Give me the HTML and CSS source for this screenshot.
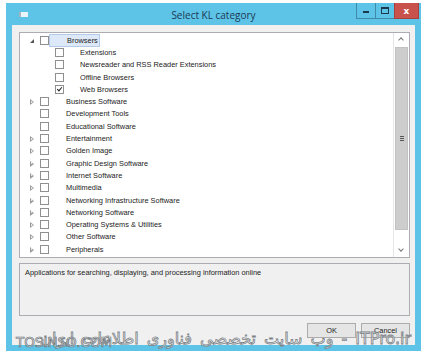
FILE: index.html
```html
<!DOCTYPE html>
<html lang="en">
<head>
    <meta charset="UTF-8">
    <title>Select KL category</title>
    <link rel="stylesheet" href="styles.css">
</head>
<body>
    <div class="window">
        <div class="titlebar">
            <span class="app-icon"></span>
            <span class="title">Select KL category</span>
            <div class="caption-buttons">
                <span class="cap-btn min"><i></i></span>
                <span class="cap-btn max"><i></i></span>
                <span class="cap-btn close">x</span>
            </div>
        </div>
        <div class="client">
            <div class="tree">
                <ul class="rows">
                    <li class="row"><span class="exp open"></span><span class="box"></span><span class="label selected">Browsers</span></li>
                    <li class="row child"><span class="box"></span><span class="label">Extensions</span></li>
                    <li class="row child"><span class="box"></span><span class="label">Newsreader and RSS Reader Extensions</span></li>
                    <li class="row child"><span class="box"></span><span class="label">Offline Browsers</span></li>
                    <li class="row child"><span class="box checked"></span><span class="label">Web Browsers</span></li>
                    <li class="row"><span class="exp"></span><span class="box"></span><span class="label">Business Software</span></li>
                    <li class="row"><span class="exp none"></span><span class="box"></span><span class="label">Development Tools</span></li>
                    <li class="row"><span class="exp none"></span><span class="box"></span><span class="label">Educational Software</span></li>
                    <li class="row"><span class="exp"></span><span class="box"></span><span class="label">Entertainment</span></li>
                    <li class="row"><span class="exp"></span><span class="box"></span><span class="label">Golden Image</span></li>
                    <li class="row"><span class="exp"></span><span class="box"></span><span class="label">Graphic Design Software</span></li>
                    <li class="row"><span class="exp"></span><span class="box"></span><span class="label">Internet Software</span></li>
                    <li class="row"><span class="exp"></span><span class="box"></span><span class="label">Multimedia</span></li>
                    <li class="row"><span class="exp"></span><span class="box"></span><span class="label">Networking Infrastructure Software</span></li>
                    <li class="row"><span class="exp"></span><span class="box"></span><span class="label">Networking Software</span></li>
                    <li class="row"><span class="exp"></span><span class="box"></span><span class="label">Operating Systems &amp; Utilities</span></li>
                    <li class="row"><span class="exp"></span><span class="box"></span><span class="label">Other Software</span></li>
                    <li class="row"><span class="exp"></span><span class="box"></span><span class="label">Peripherals</span></li>
                    <li class="row"><span class="exp none"></span><span class="box"></span><span class="label"></span></li>
                </ul>
                <div class="scrollbar">
                    <span class="arrow up"></span>
                    <div class="track">
                        <div class="thumb"><span class="grip"></span></div>
                    </div>
                    <span class="arrow down"></span>
                </div>
            </div>
            <div class="description">Applications for searching, displaying, and processing information online</div>
            <div class="buttons">
                <button class="btn">OK</button>
                <button class="btn">Cancel</button>
            </div>
        </div>
        <div class="watermark">
            <span class="wm-fa" dir="rtl">ITPro.ir - وب سایت تخصصی فناوری اطلاعات ایران</span>
            <span class="wm-en">TOSINSO.COM</span>
        </div>
    </div>
</body>
</html>
```
FILE: styles.css
```css
body {
    margin: 0;
    background: #fff;
    font-family: "Liberation Sans", Arial, sans-serif;
}

.window {
    position: relative;
    width: 415px;
    height: 348px;
    margin: 3px 0 0 6px;
    background: #5dc3e7;
    padding: 0 6px 6px;
    box-sizing: border-box;
}

.titlebar {
    height: 22px;
    display: flex;
    align-items: center;
    justify-content: center;
    position: relative;
}

.app-icon {
    position: absolute;
    left: 7px;
    top: 9px;
    width: 7px;
    height: 5px;
    background: #e9f5fa;
    border-left: 2px solid #a6b4bb;
}

.title {
    font-family: "Open Sans", "Noto Sans", sans-serif;
    font-size: 10px;
    color: #1b3a55;
    margin-top: 1px;
}

.caption-buttons {
    position: absolute;
    right: -4px;
    top: 0;
    display: flex;
}

.cap-btn {
    width: 20px;
    height: 16px;
    display: flex;
    align-items: center;
    justify-content: center;
    border: 1px solid #3f8aa8;
    border-top: none;
    box-sizing: border-box;
    margin-left: -1px;
}

.cap-btn.min i {
    width: 6px;
    height: 2px;
    background: #1c3a4c;
    margin-top: 3px;
}

.cap-btn.max i {
    width: 6px;
    height: 4px;
    border: 1px solid #1c3a4c;
    border-top-width: 2px;
}

.cap-btn.close {
    width: 25px;
    background: #c9524d;
    border-color: #a8413c;
    color: #fff;
    font-family: "DejaVu Sans", sans-serif;
    font-weight: bold;
    font-size: 9px;
}

.client {
    background: #f0f0f0;
    height: 320px;
    padding: 7px 5px 0 7px;
    box-sizing: border-box;
}

.tree {
    height: 226px;
    background: #fff;
    border: 1px solid #abadb3;
    box-sizing: border-box;
    display: flex;
    overflow: hidden;
}

.rows {
    flex: 1;
    list-style: none;
    margin: 0;
    padding: 1px 0 0 0;
    font-size: 7.4px;
    color: #222;
}

.row {
    height: 12.3px;
    display: flex;
    align-items: center;
    padding-left: 9px;
}

.row.child {
    padding-left: 35px;
}

.exp {
    width: 11px;
    height: 9px;
    position: relative;
}

.exp::before {
    content: "";
    position: absolute;
    left: 1px;
    top: 2px;
    border-left: 4px solid #9a9a9a;
    border-top: 3px solid transparent;
    border-bottom: 3px solid transparent;
}

.exp::after {
    content: "";
    position: absolute;
    left: 2px;
    top: 3.5px;
    border-left: 2px solid #fff;
    border-top: 1.5px solid transparent;
    border-bottom: 1.5px solid transparent;
}

.exp.open::before {
    left: 1px;
    top: 3px;
    border: none;
    width: 0;
    height: 0;
    border-right: 4px solid #555;
    border-top: 4px solid transparent;
}

.exp.open::after,
.exp.none::before,
.exp.none::after {
    display: none;
}

.box {
    width: 9px;
    height: 9px;
    border: 1px solid #8f8f8f;
    box-sizing: border-box;
    background: #fff;
    position: relative;
    flex-shrink: 0;
}

.box.checked::after {
    content: "";
    position: absolute;
    left: 2px;
    top: 0;
    width: 2px;
    height: 4px;
    border-right: 1.5px solid #222;
    border-bottom: 1.5px solid #222;
    transform: rotate(40deg);
}

.label {
    margin-left: 16px;
    white-space: nowrap;
    line-height: 11px;
    padding: 0 1px;
}

.child .label {
    margin-left: 15px;
}

.label.selected {
    margin-left: 0;
    padding: 0 1px 0 17px;
    height: 11px;
    background: #dde9f8;
    border: 1px solid #b3cbe8;
}

.scrollbar {
    width: 15px;
    border-left: 1px solid #e6e6e6;
    display: flex;
    flex-direction: column;
    background: #fff;
}

.arrow {
    height: 13px;
    position: relative;
}

.arrow::before {
    content: "";
    position: absolute;
    left: 5px;
    width: 3px;
    height: 3px;
    border-left: 1px solid #777;
    border-top: 1px solid #777;
    transform: rotate(45deg);
    top: 5px;
}

.arrow.down::before {
    transform: rotate(225deg);
    top: 3px;
}

.track {
    flex: 1;
}

.thumb {
    height: 181px;
    margin: 1px 1px 0;
    background: #cdcdcd;
    border: 1px solid #c2c2c2;
    display: flex;
    align-items: center;
    justify-content: center;
}

.grip {
    width: 4px;
    height: 1px;
    background: #555;
    box-shadow: 0 2px 0 #555, 0 -2px 0 #555;
}

.description {
    margin-top: 5px;
    height: 53px;
    border: 1px solid #abadb3;
    box-sizing: border-box;
    padding: 4px 5px;
    font-size: 7.4px;
    color: #222;
}

.buttons {
    display: flex;
    justify-content: flex-end;
    gap: 5px;
    margin-top: 7px;
}

.btn {
    width: 49px;
    height: 15px;
    padding: 0;
    background: #e5e5e5;
    border: 1px solid #acacac;
    font-family: "Liberation Sans", Arial, sans-serif;
    font-size: 7.4px;
    color: #222;
}

.watermark {
    position: absolute;
    left: 8px;
    right: 10px;
    top: 328px;
    height: 22px;
    pointer-events: none;
}

.wm-fa {
    position: absolute;
    right: 0;
    top: -2px;
    font-family: "DejaVu Sans", sans-serif;
    font-size: 16px;
    word-spacing: 3px;
    color: rgba(255, 255, 255, 0.55);
    -webkit-text-stroke: 0.8px #7c8388;
    white-space: nowrap;
}

.wm-en {
    position: absolute;
    left: 2px;
    top: 3px;
    font-family: "DejaVu Sans", sans-serif;
    font-size: 13.5px;
    color: rgba(255, 255, 255, 0.55);
    -webkit-text-stroke: 0.7px #6d7479;
    white-space: nowrap;
}
```
